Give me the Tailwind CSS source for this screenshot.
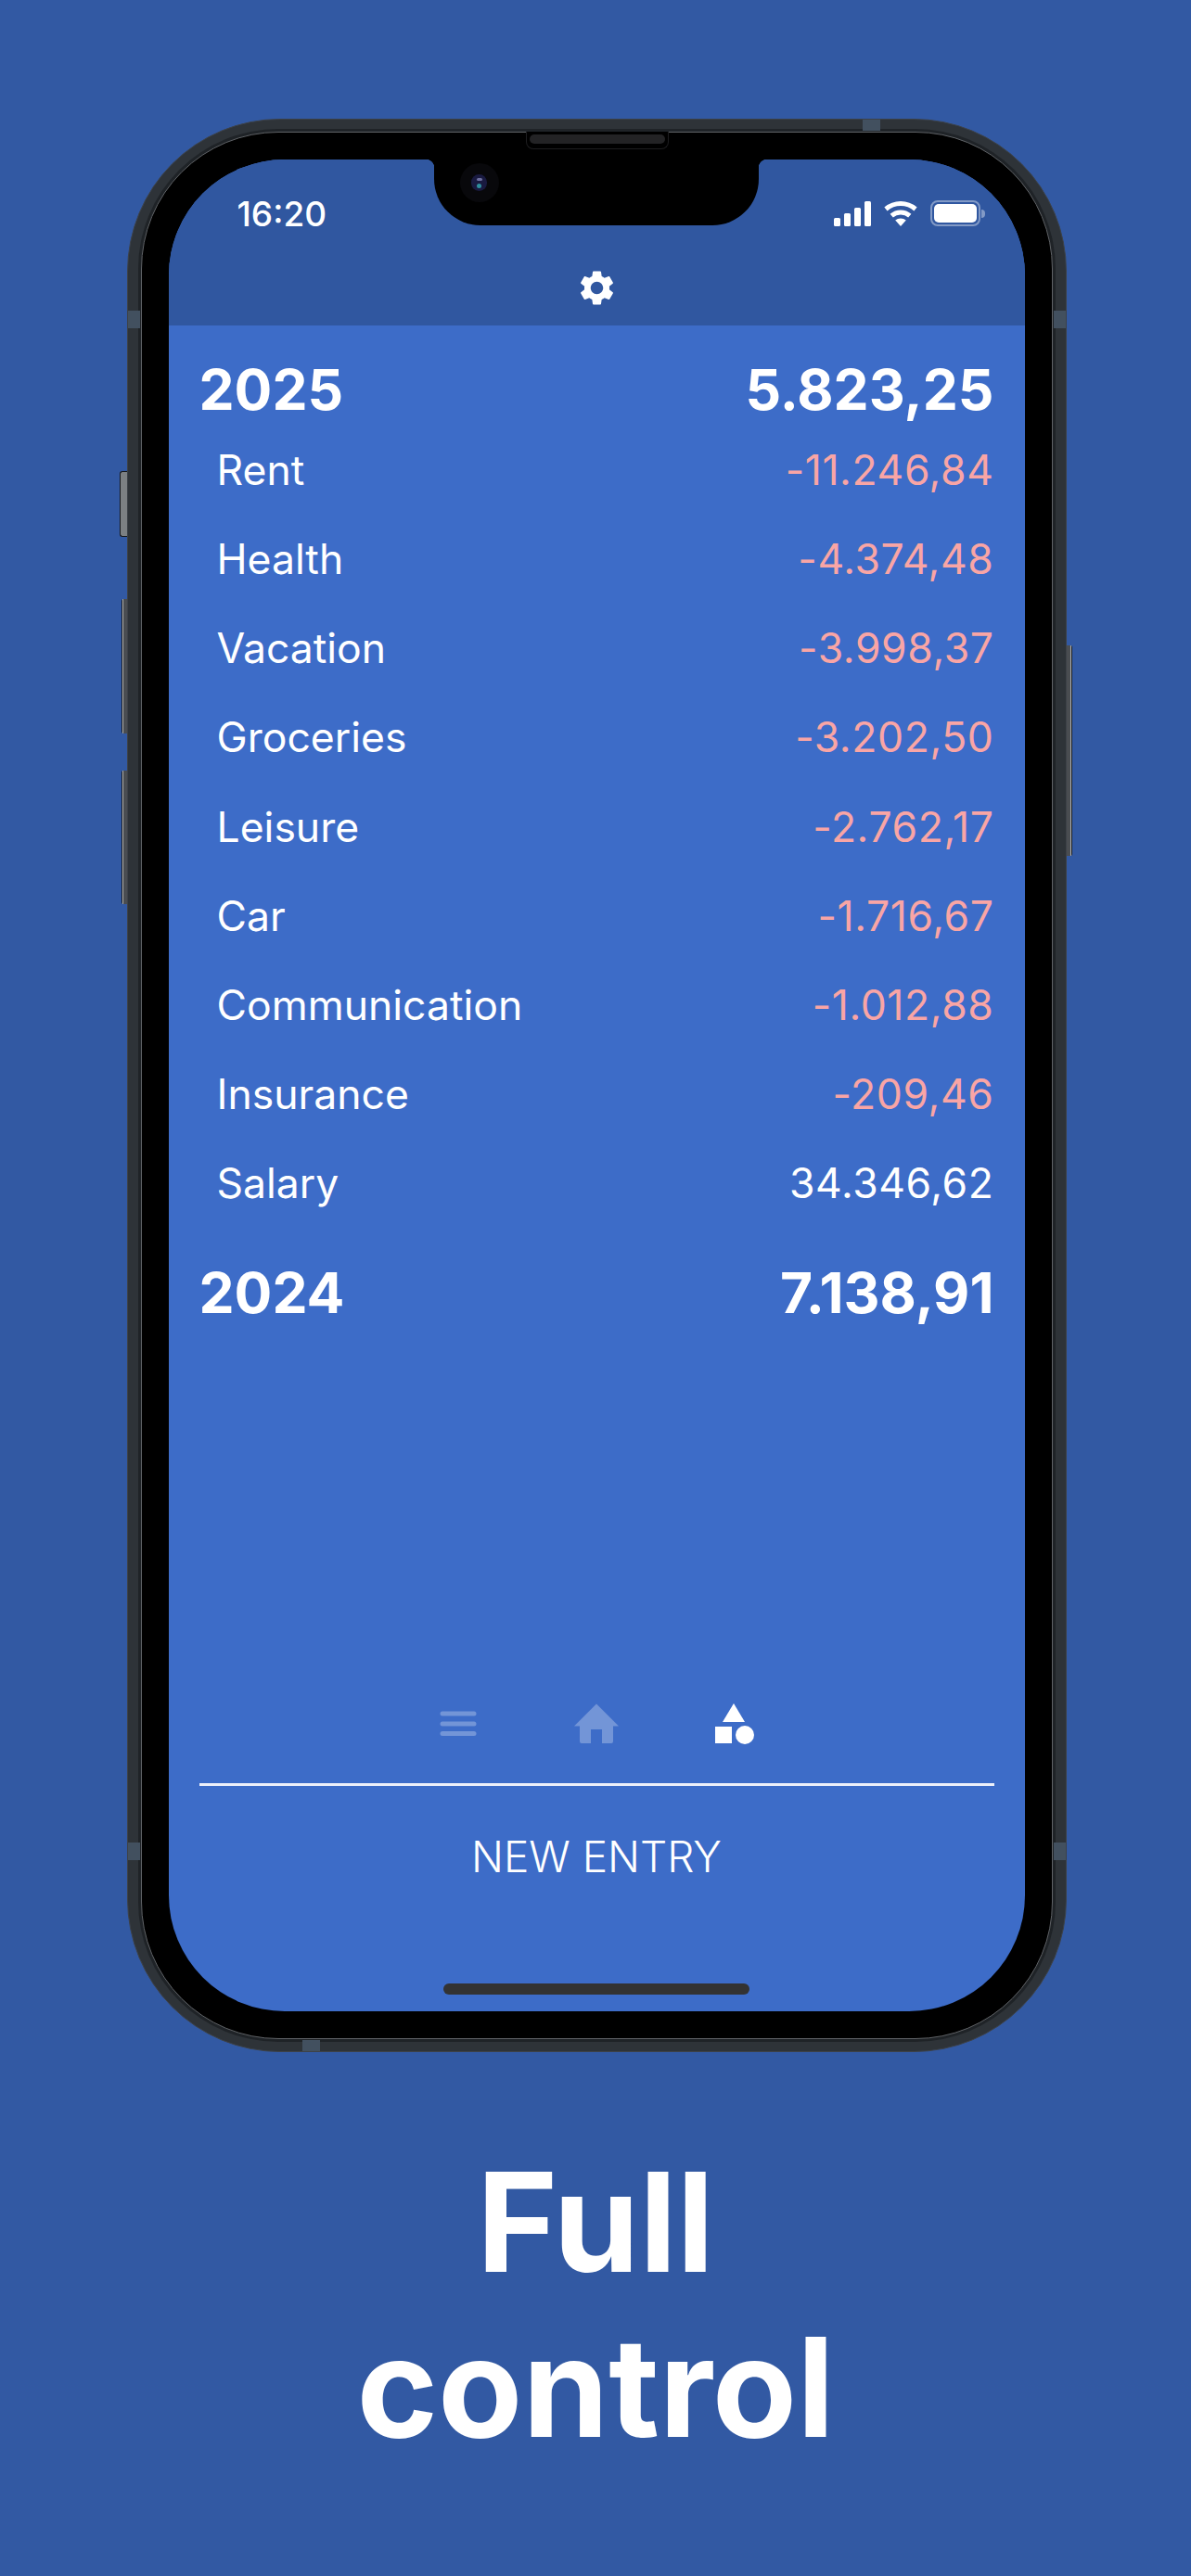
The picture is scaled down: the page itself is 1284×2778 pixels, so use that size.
<!DOCTYPE html>
<html lang="en">
<head>
    <meta charset="UTF-8"/>
    <meta name="viewport" content="width=device-width, initial-scale=1"/>
    <title>Full control</title>
    <script src="https://cdn.jsdelivr.net/npm/@tailwindcss/browser@4"></script>
</head>
<body class="bg-[#3259a3] font-[Inter,sans-serif] text-white">
    <div class="w-[1284px] h-[2778px] flex flex-col items-center overflow-hidden pt-[128px]">
        <!-- phone -->
        <div class="relative w-[1013px] h-[2085px] ml-[2px] shrink-0">
            <!-- side buttons -->
            <div class="absolute left-[-8px] top-[380px] w-[8px] h-[71px] rounded-l-[3px] bg-[#7c8083] border border-r-0 border-[#16181b]"></div>
            <div class="absolute left-[-6px] top-[518px] w-[6px] h-[145px] rounded-l-[2px] bg-[linear-gradient(to_right,#17191c_1px,#b5b7b9_1px,#b5b7b9_2px,#4a4d51_2px)]"></div>
            <div class="absolute left-[-6px] top-[703px] w-[6px] h-[144px] rounded-l-[2px] bg-[linear-gradient(to_right,#17191c_1px,#b5b7b9_1px,#b5b7b9_2px,#4a4d51_2px)]"></div>
            <div class="absolute right-[-6px] top-[568px] w-[6px] h-[227px] rounded-r-[2px] bg-[linear-gradient(to_left,#17191c_1px,#b5b7b9_1px,#b5b7b9_2px,#4a4d51_2px)]"></div>

            <div class="relative h-full rounded-[165px] bg-[#2e3338] border border-[#3d4248] px-[14px] py-[13px]">
                <div class="h-full rounded-[148px] bg-black border border-[#5f6266] shadow-[0_0_0_3px_#1f2327] px-[29px] py-[29px]">
                    <!-- screen -->
                    <div class="relative h-full rounded-[125px] overflow-hidden bg-[#3d6cc8] flex flex-col">
                        <!-- notch -->
                        <div class="absolute left-[277px] top-0 w-[9px] h-[9px] bg-[radial-gradient(circle_at_0_100%,transparent_9px,black_9.5px)]"></div>
                        <div class="absolute left-[286px] top-0 w-[350px] h-[71px] bg-black rounded-b-[50px]"></div>
                        <div class="absolute left-[636px] top-0 w-[9px] h-[9px] bg-[radial-gradient(circle_at_100%_100%,transparent_9px,black_9.5px)]"></div>
                        <div class="absolute left-[314px] top-[4px] w-[42px] h-[42px] rounded-full bg-[#08080b] flex items-center justify-center">
                            <div class="w-[17px] h-[18px] rounded-full bg-[#191a40] flex flex-col items-center justify-center gap-[3px]">
                                <div class="w-[6px] h-[3px] rounded-full bg-[#6d6f9e]"></div>
                                <div class="w-[5px] h-[5px] rounded-full bg-[#2f8f9c]"></div>
                            </div>
                        </div>

                        <header class="h-[179px] bg-[#3057a0] shrink-0 flex flex-col">
                            <div class="flex items-center justify-between pl-[74px] pr-[43px] pt-[38px] h-[78px]">
                                <span class="text-[37px] font-medium leading-none">16:20</span>
                                <div class="flex items-center gap-[13px]">
                                    <svg width="40" height="27" viewBox="0 0 40 27" fill="#fff">
                                        <rect x="0" y="18" width="7" height="9" rx="1.5"/>
                                        <rect x="11" y="13" width="7" height="14" rx="1.5"/>
                                        <rect x="22" y="7" width="7" height="20" rx="1.5"/>
                                        <rect x="33" y="0" width="7" height="27" rx="1.5"/>
                                    </svg>
                                    <svg width="38" height="28" viewBox="0 0 37 28" fill="none" stroke="#fff" stroke-width="5">
                                        <path d="M2.5 9.500A24.500 24.500 0 0 1 34.500 9.500"/>
                                        <path d="M8.700 16.700A15 15 0 0 1 28.300 16.700"/>
                                        <path d="M18.500 28L12.700 21.500A9 9 0 0 1 24.300 21.500Z" fill="#fff" stroke="none"/>
                                    </svg>
                                    <div class="flex items-center gap-[1px]">
                                        <div class="w-[54px] h-[28px] rounded-[8px] border-[2px] border-white/40 p-[2px]">
                                            <div class="h-full rounded-[5px] bg-white"></div>
                                        </div>
                                        <div class="w-[4px] h-[9px] rounded-r-full bg-white/40"></div>
                                    </div>
                                </div>
                            </div>
                            <div class="flex-1 flex items-center justify-center pt-[20px]">
                                <svg width="45" height="45" viewBox="0 0 24 24" fill="#fff">
                                    <path d="M19.14 12.94c.04-.3.06-.61.06-.94 0-.32-.02-.64-.07-.94l2.03-1.58c.18-.14.23-.41.12-.61l-1.92-3.32c-.12-.22-.37-.29-.59-.22l-2.39.96c-.5-.38-1.03-.7-1.62-.94l-.36-2.54c-.04-.24-.24-.41-.48-.41h-3.84c-.24 0-.43.17-.47.41l-.36 2.54c-.59.24-1.13.57-1.62.94l-2.39-.96c-.22-.08-.47 0-.59.22L2.74 8.87c-.12.21-.08.47.12.61l2.03 1.58c-.05.3-.09.63-.09.94s.02.64.07.94l-2.03 1.58c-.18.14-.23.41-.12.61l1.92 3.32c.12.22.37.29.59.22l2.39-.96c.5.38 1.03.7 1.62.94l.36 2.54c.05.24.24.41.48.41h3.84c.24 0 .44-.17.47-.41l.36-2.54c.59-.24 1.13-.56 1.62-.94l2.39.96c.22.08.47 0 .59-.22l1.92-3.32c.12-.22.07-.47-.12-.61l-2.01-1.58zM12 15.6c-1.98 0-3.6-1.62-3.6-3.6s1.62-3.6 3.6-3.6 3.6 1.62 3.6 3.6-1.62 3.6-3.6 3.6z"/>
                                </svg>
                            </div>
                        </header>

                        <main class="flex-1 px-[33px] pt-[30px]">
                            <div class="flex justify-between items-center h-[78px] text-[60.5px] font-bold leading-none">
                                <span>2025</span><span>5.823,25</span>
                            </div>
                            <ul class="text-[44.5px] leading-none">
                                <li class="flex justify-between items-center h-[96.2px] pl-[19px]"><span>Rent</span><span class="text-[#f9a5a5] tracking-[0.6px]">-11.246,84</span></li>
                                <li class="flex justify-between items-center h-[96.2px] pl-[19px]"><span>Health</span><span class="text-[#f9a5a5] tracking-[0.6px]">-4.374,48</span></li>
                                <li class="flex justify-between items-center h-[96.2px] pl-[19px]"><span>Vacation</span><span class="text-[#f9a5a5] tracking-[0.6px]">-3.998,37</span></li>
                                <li class="flex justify-between items-center h-[96.2px] pl-[19px]"><span>Groceries</span><span class="text-[#f9a5a5] tracking-[0.6px]">-3.202,50</span></li>
                                <li class="flex justify-between items-center h-[96.2px] pl-[19px]"><span>Leisure</span><span class="text-[#f9a5a5] tracking-[0.6px]">-2.762,17</span></li>
                                <li class="flex justify-between items-center h-[96.2px] pl-[19px]"><span>Car</span><span class="text-[#f9a5a5] tracking-[0.6px]">-1.716,67</span></li>
                                <li class="flex justify-between items-center h-[96.2px] pl-[19px]"><span>Communication</span><span class="text-[#f9a5a5] tracking-[0.6px]">-1.012,88</span></li>
                                <li class="flex justify-between items-center h-[96.2px] pl-[19px]"><span>Insurance</span><span class="text-[#f9a5a5] tracking-[0.6px]">-209,46</span></li>
                                <li class="flex justify-between items-center h-[96.2px] pl-[19px]"><span>Salary</span><span class="tracking-[0.6px]">34.346,62</span></li>
                            </ul>
                            <div class="flex justify-between items-center h-[78px] mt-[31px] text-[60.5px] font-bold leading-none">
                                <span>2024</span><span>7.138,91</span>
                            </div>
                        </main>

                        <footer class="px-[33px] shrink-0">
                            <div class="grid grid-cols-[149px_149px_149px] justify-center justify-items-center items-center pb-[42px]">
                                <svg width="40" height="28" viewBox="0 0 40 28" fill="#fff" fill-opacity="0.28">
                                    <rect x="0.500" y="0.500" width="39" height="5" rx="2.500"/>
                                    <rect x="0.500" y="11.500" width="39" height="5" rx="2.500"/>
                                    <rect x="0.500" y="22" width="39" height="5" rx="2.500"/>
                                </svg>
                                <svg width="48" height="44" viewBox="0 0 48 44" fill="#fff" fill-opacity="0.28">
                                    <path d="M24 0.500L48 24.500H42V41a2 2 0 0 1-2 2H30V28H18V43H8a2 2 0 0 1-2-2V24.500H0Z"/>
                                </svg>
                                <svg width="42" height="44" viewBox="0 0 42 44" fill="#fff">
                                    <path d="M20 0L32 20H8Z"/>
                                    <rect x="0" y="25" width="18" height="18"/>
                                    <circle cx="32" cy="34" r="10"/>
                                </svg>
                            </div>
                            <div class="h-[3px] bg-white/90"></div>
                            <div class="h-[152px] mb-[91px] flex items-center justify-center text-[46px] font-light leading-none">NEW ENTRY</div>
                        </footer>

                        <div class="absolute left-[296px] bottom-[18px] w-[330px] h-[12px] rounded-full bg-[#333333]"></div>
                    </div>
                </div>

                <!-- antenna bands and speaker sit over the frame -->
                <div class="absolute left-0 top-[206px] w-[13px] h-[19px] bg-[#42505f]"></div>
                <div class="absolute right-0 top-[206px] w-[13px] h-[19px] bg-[#42505f]"></div>
                <div class="absolute left-0 bottom-[206px] w-[13px] h-[19px] bg-[#42505f]"></div>
                <div class="absolute right-0 bottom-[206px] w-[13px] h-[19px] bg-[#42505f]"></div>
                <div class="absolute right-[200px] top-0 w-[19px] h-[12px] bg-[#42505f]"></div>
                <div class="absolute left-[188px] bottom-0 w-[19px] h-[12px] bg-[#42505f]"></div>
                <div class="absolute left-[429px] top-[13px] w-[154px] h-[19px] rounded-b-[8px] bg-black border border-t-0 border-[#1d1d1f] flex justify-center pt-[3px]">
                    <div class="w-[146px] h-[10px] rounded-full bg-[#232325]"></div>
                </div>
            </div>
        </div>

        <h1 class="mt-[94px] text-[149px] font-bold leading-[178px] text-center">Full<br/>control</h1>
    </div>
</body>
</html>
